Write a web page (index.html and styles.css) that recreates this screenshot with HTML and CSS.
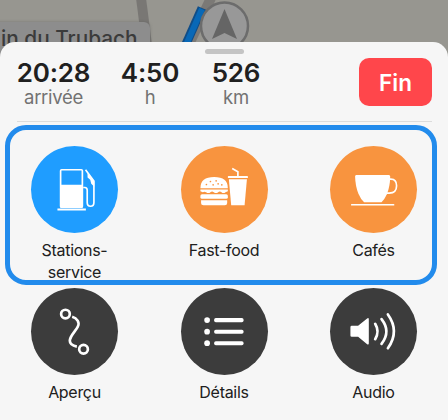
FILE: index.html
```html
<!DOCTYPE html>
<html lang="fr">
<head>
<meta charset="utf-8">
<title>Navigation</title>
<link rel="stylesheet" href="styles.css">
</head>
<body>
<div class="map">
  <svg class="roads" viewBox="0 0 448 60" width="448" height="60">
    <path d="M136-2h10l8 62h-10z" fill="#797774"/>
    <path d="M211-2L190 42" stroke="#7b7976" stroke-width="10"/>
    <path d="M202 8L186 44" stroke="#104d87" stroke-width="9"/>
    <path d="M202 9L186 45" stroke="#0868b7" stroke-width="6"/>
    <circle cx="224.500" cy="26" r="23.500" fill="#989898" stroke="#6c6c6c" stroke-width="2.500"/>
    <path d="M224.500 9L237 39L224.500 33L212 39z" fill="#656565"/>
  </svg>
  <div class="place">in du Trubach</div>
</div>
<main class="sheet">
  <div class="grabber"></div>
  <header class="trip">
    <div class="stat arrival"><b>20:28</b><span>arrivée</span></div>
    <div class="stat duration"><b>4:50</b><span>h</span></div>
    <div class="stat distance"><b>526</b><span>km</span></div>
    <button class="end">Fin</button>
  </header>
  <section class="row highlighted">
    <div class="item">
      <svg class="disc blue" viewBox="94 78 260 260">
        <rect x="182.500" y="149" width="65" height="112" rx="3" fill="none" stroke="#fff" stroke-width="5"/>
        <path d="M182 194h66v68h-66zM173 265h85v6h-85z" fill="#fff"/>
        <path d="M250 202h5q7 0 7 8v37q0 11 10 11t10-11v-64l-25-34" fill="none" stroke="#fff" stroke-width="5"/>
        <path d="M263 160l20 24v16l-9-9-3-12-8-7z" fill="#fff"/>
      </svg>
      <span>Stations-<br>service</span>
    </div>
    <div class="item">
      <svg class="disc orange" viewBox="92 78 260 260">
        <g fill="#fff">
          <path d="M150 204q0-33 41-33t41 33z"/>
          <path d="M150 208h82v5l-7 3q-6 5-12 0-5-4-10 0-6 5-13 0-5-4-10 0-6 5-13 0-5-3-10 0l-7-3z"/>
          <rect x="150" y="222" width="82" height="14" rx="5"/>
          <path d="M152 240h78v8q0 7-7 7h-64q-7 0-7-7z"/>
          <rect x="232" y="168" width="60" height="6" rx="2"/>
          <path d="M235 177h54l-7 78h-40z"/>
        </g>
        <path d="M262 168v-13l-17-10" fill="none" stroke="#fff" stroke-width="5"/>
        <g fill="#f8943f"><circle cx="180" cy="184" r="2.500"/><circle cx="197" cy="182" r="2.500"/><circle cx="168" cy="193" r="2.500"/><circle cx="188" cy="194" r="2.500"/><circle cx="203" cy="191" r="2.500"/><circle cx="214" cy="194" r="2.500"/></g>
      </svg>
      <span>Fast-food</span>
    </div>
    <div class="item">
      <svg class="disc orange" viewBox="96 78 260 260">
        <path d="M174 165h98q4 0 4 5-1 31-10 52-8 17-16 24h-52q-10-8-17-25-9-22-10-51 0-5 3-5z" fill="#fff"/>
        <path d="M275 177h3q17 0 17 20 0 22-22 22h-7" fill="none" stroke="#fff" stroke-width="5"/>
        <path d="M161 253.500h125" stroke="#fff" stroke-width="5" stroke-linecap="round"/>
      </svg>
      <span>Cafés</span>
    </div>
  </section>
  <section class="row">
    <div class="item">
      <svg class="disc dark" viewBox="94 24 260 260">
        <g fill="none" stroke="#fff" stroke-width="8"><circle cx="197" cy="102" r="13"/><circle cx="251" cy="207" r="13"/><path d="M217 110c15 4 23 17 17 29-6 14-24 27-24 43 0 9 9 15 21 17"/></g>
      </svg>
      <span>Aperçu</span>
    </div>
    <div class="item">
      <svg class="disc dark" viewBox="92 24 260 260">
        <g fill="#fff"><circle cx="170" cy="120" r="8.500"/><circle cx="170" cy="154.500" r="8.500"/><circle cx="170" cy="189" r="8.500"/><rect x="191" y="114" width="88" height="12" rx="5"/><rect x="191" y="148.500" width="88" height="12" rx="5"/><rect x="191" y="183" width="88" height="12" rx="5"/></g>
      </svg>
      <span>Détails</span>
    </div>
    <div class="item">
      <svg class="disc dark" viewBox="96 24 260 260">
        <path d="M161 137h19l27-22q5-3 5 3v71q0 6-5 3l-27-22h-19q-4 0-4-4v-25q0-4 4-4z" fill="#fff"/>
        <g fill="none" stroke="#fff" stroke-width="8" stroke-linecap="round"><path d="M231 131q14 23 0 46"/><path d="M250 117q29 37 0 74"/><path d="M269 103q36 50 0 101"/></g>
      </svg>
      <span>Audio</span>
    </div>
  </section>
</main>
</body>
</html>
```
FILE: styles.css
```css
* { box-sizing: border-box; }
body {
  margin: 0;
  width: 448px;
  height: 420px;
  overflow: hidden;
  position: relative;
  background: #979690;
  font-family: Inter, "Liberation Sans", sans-serif;
  color: #202020;
}
.map { position: absolute; inset: 0 0 auto; height: 60px; overflow: hidden; }
.roads { position: absolute; left: 0; top: 0; }
.place {
  position: absolute;
  left: -10px;
  top: 22px;
  width: 160px;
  height: 38px;
  padding-left: 11px;
  border-radius: 6px;
  background: #8d8d8d;
  box-shadow: 0 0 3px #55555580;
  color: #3b3b3b;
  font-size: 20.800px;
  font-weight: 500;
  line-height: 33px;
  white-space: nowrap;
}
.sheet {
  position: relative;
  margin-top: 42px;
  height: 378px;
  padding: 7px 11.500px 0 5px;
  border-radius: 15px 15px 0 0;
  background: #f6f6f6;
}
.grabber { width: 39px; height: 5px; margin-left: 200px; border-radius: 3px; background: #c4c4c4; }
.trip {
  display: flex;
  align-items: flex-start;
  height: 68px;
  margin: 0 4.500px 3px 12px;
  border-bottom: 1px solid #dcdcdc;
}
.stat { display: flex; flex-direction: column; align-items: center; padding-top: 6px; }
.stat b { font-size: 26px; font-weight: 600; line-height: 26px; letter-spacing: -0.2px; }
.stat span { color: #727272; font-size: 18.500px; line-height: 22px; letter-spacing: -0.3px; }
.arrival { width: 73px; }
.duration { width: 60px; margin-left: 30px; }
.distance { width: 54px; margin-left: 29px; }
.end {
  width: 73px;
  height: 48px;
  margin: 4px 0 0 auto;
  padding: 0;
  border: 0;
  border-radius: 10px;
  background: #ff464b;
  color: #fff;
  font: 600 22.500px Inter, sans-serif;
}
.row {
  display: flex;
  justify-content: space-between;
  height: 132px;
  padding: 3px 19.500px 0 26px;
}
.highlighted {
  height: 160px;
  padding: 16px 14.500px 0 21px;
  border: 5px solid #228bec;
  border-radius: 21px;
}
.item { display: flex; flex-direction: column; align-items: center; width: 87px; }
.item span {
  margin-top: 7px;
  font-size: 16px;
  line-height: 21.500px;
  letter-spacing: -0.3px;
  text-align: center;
  white-space: nowrap;
}
.disc { display: block; flex: none; width: 87px; height: 87px; border-radius: 50%; }
.blue { background: #1f9dff; }
.orange { background: #f8943f; }
.dark { background: #3c3c3c; }
```
